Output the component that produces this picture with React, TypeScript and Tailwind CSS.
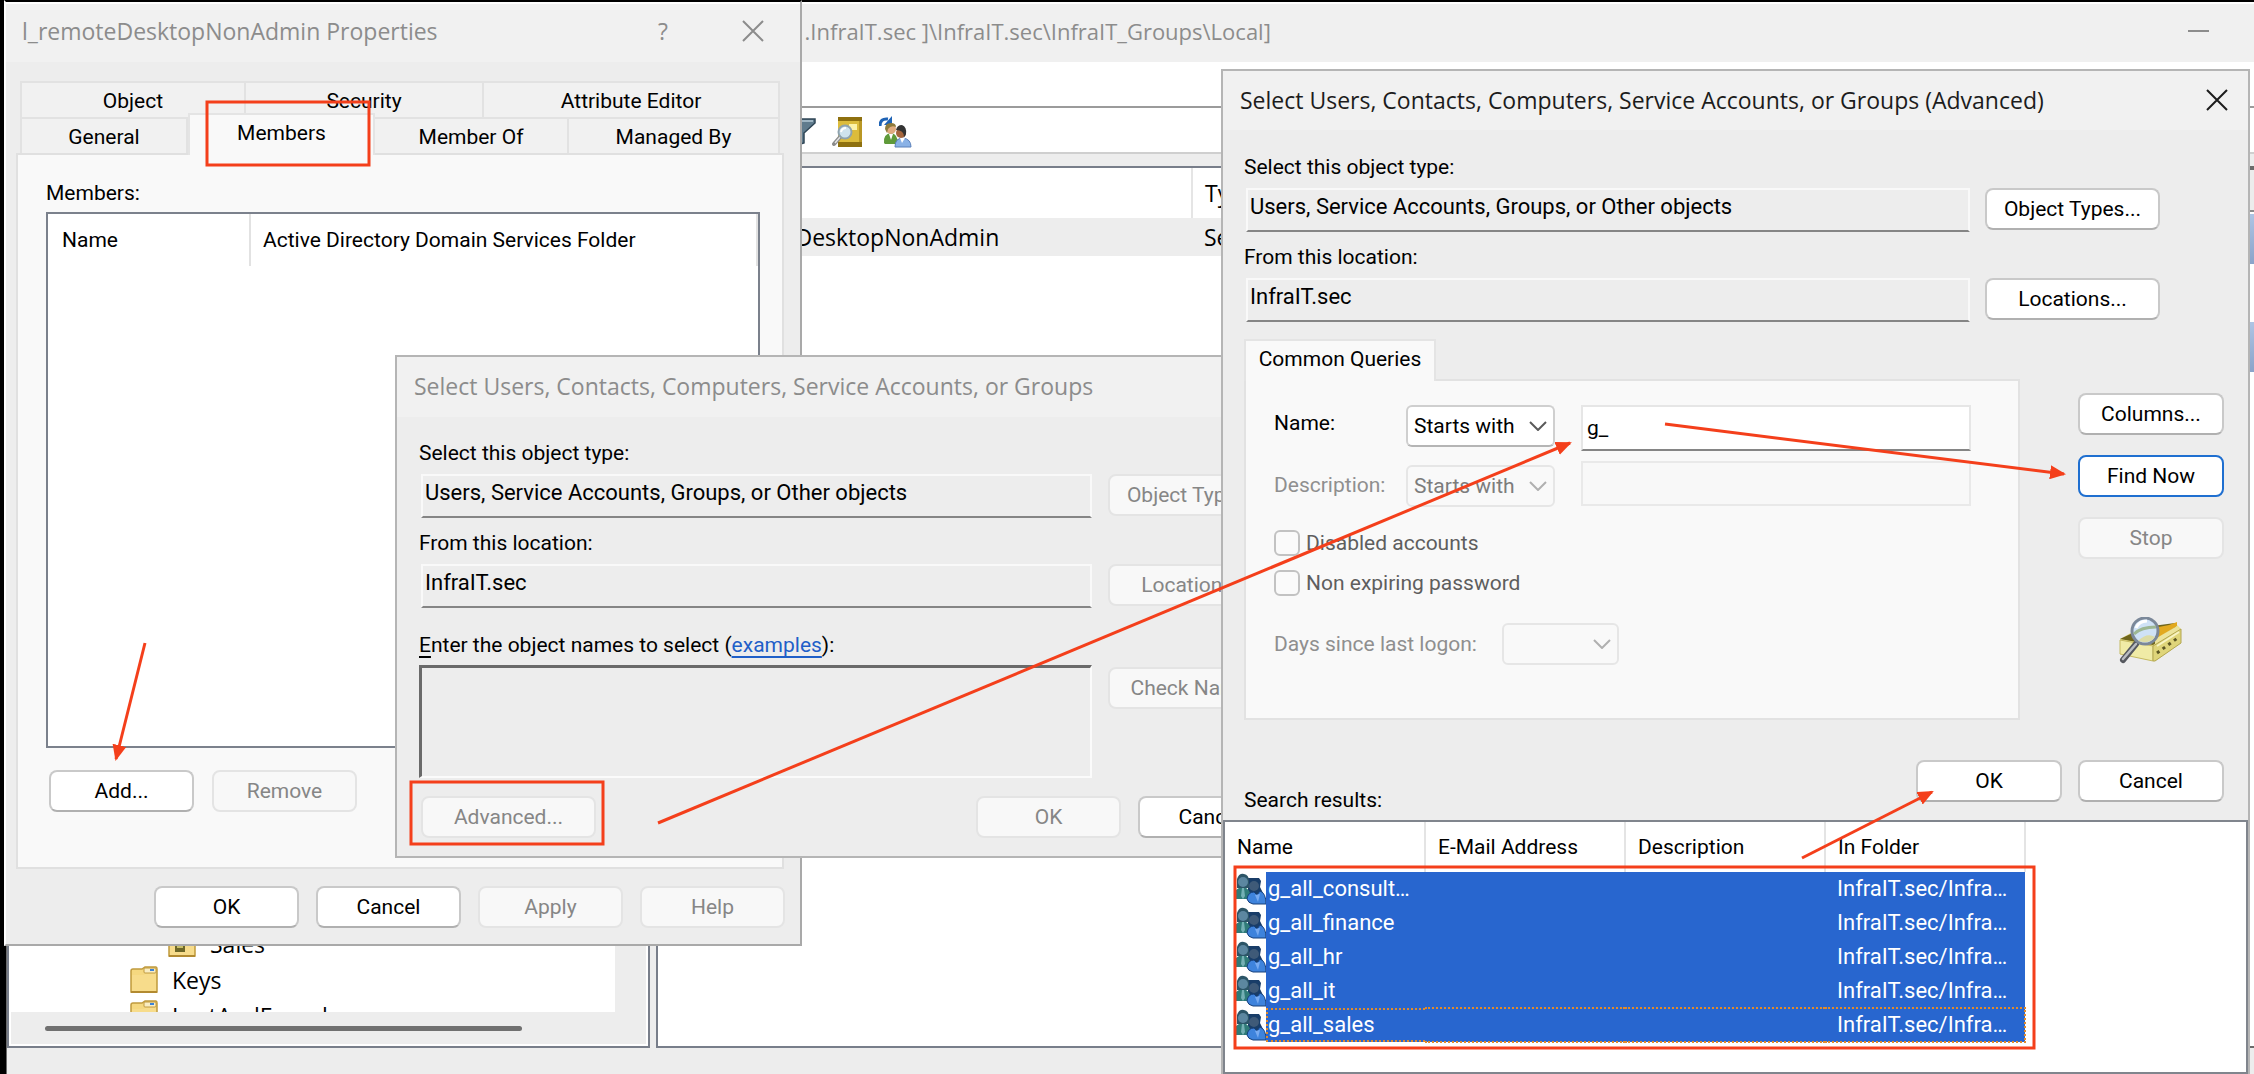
import type { ReactNode } from 'react';

const titleFont = "font-['Open_Sans','Noto_Sans',sans-serif] text-[23px] leading-8";
const bodyFont = "font-['Roboto','Noto_Sans',sans-serif] text-[21px] leading-7";

function Button({ children, className = '', disabled = false, primary = false }: { children: ReactNode; className?: string; disabled?: boolean; primary?: boolean }) {
  const look = disabled
    ? 'border-[#e4e4e4] bg-[#f8f8f8] text-[#868686]'
    : primary
      ? 'border-[#1f6fd0] bg-white text-black'
      : 'border-[#c9c9c9] border-b-[#b0b0b0] bg-white text-black';
  return (
    <button type="button" disabled={disabled} className={`h-[42px] shrink-0 overflow-hidden whitespace-nowrap rounded-lg border-2 ${look} ${className}`}>
      {children}
    </button>
  );
}

function CloseIcon({ className = '' }: { className?: string }) {
  return (
    <svg className={`size-[22px] ${className}`} viewBox="0 0 22 22" fill="none" stroke="currentColor" strokeWidth="2">
      <path d="M1 1L21 21M21 1L1 21" />
    </svg>
  );
}

function Field({ id, label, value }: { id: string; label: string; value: string }) {
  return (
    <div className="min-w-0 flex-1">
      <label htmlFor={id} className="block pb-[7px]">{label}</label>
      <input
        id={id}
        readOnly
        value={value}
        className="ml-0.5 block h-11 w-full border-2 border-[#f9f9f9] border-b-[#858585] bg-[#ededed] pb-2 pl-0.5 text-[22px] outline-none"
      />
    </div>
  );
}

function FolderIcon({ marked = false }: { marked?: boolean }) {
  return (
    <svg className="size-7 shrink-0" viewBox="0 0 28 28">
      <path d="M1 5Q1 3 3 3H12L15 1H26Q27 1 27 3V26H1Z" fill="#f5d880" stroke="#c09a3e" strokeWidth="1.5" />
      <path d="M2 9H14L16 7H26V25H2Z" fill="#f7dc8b" />
      <rect x="14" y="2" width="12" height="5" rx="1" fill="#f9edc3" stroke="#c09a3e" />
      <rect x="20" y="3" width="4" height="2" fill="#3b82d8" />
      <path d="M1 26H27" stroke="#b28a30" strokeWidth="2" />
      {marked && (
        <g>
          <rect x="7" y="13" width="10" height="9" fill="#6d6727" />
          <rect x="9" y="14" width="6" height="4" fill="#c9c069" />
        </g>
      )}
    </svg>
  );
}

function FilterIcon() {
  return (
    <svg className="h-7 w-8" viewBox="0 0 32 28">
      <path d="M1 1H31V5L20 15V25L13 27V15L1 5Z" fill="#5f7b8d" stroke="#2f4656" strokeWidth="1.5" />
      <path d="M3 3H29" stroke="#9eb5c3" strokeWidth="2" />
      <path d="M15 15V24" stroke="#a9bfcc" strokeWidth="2" />
    </svg>
  );
}

function BookSearchIcon() {
  return (
    <svg className="h-8 w-[31px]" viewBox="0 0 31 32">
      <rect x="6" y="1" width="24" height="30" fill="#dcbc3c" />
      <path d="M6 1H30V5H6ZM6 26H30V31H6Z" fill="#8e700f" />
      <path d="M27 5H30V26H27Z" fill="#b99724" />
      <rect x="17" y="8" width="8" height="6" fill="#fdf3a8" />
      <path d="M9 20L2 28" stroke="#8b8b8b" strokeWidth="4" strokeLinecap="round" />
      <path d="M9 20L3 27" stroke="#e4e4e4" strokeWidth="1.5" />
      <circle cx="13" cy="16" r="6.5" fill="#cfe3ee" stroke="#8fa3ae" strokeWidth="2" />
      <path d="M9 16Q10 12 14 12" stroke="#fff" strokeWidth="2" fill="none" />
    </svg>
  );
}

function AddUsersIcon() {
  return (
    <svg className="h-8 w-[33px]" viewBox="0 0 33 32">
      <path d="M1 10Q1 2 9 3" stroke="#1f63b5" strokeWidth="3" fill="none" />
      <path d="M13 0V9H5Z" fill="#1f63b5" />
      <path d="M5 27Q4 18 12 17Q19 18 19 28H6Z" fill="#5f9a3a" />
      <path d="M10 18L12 24L14 18Z" fill="#fff" />
      <circle cx="12" cy="13" r="5" fill="#e0ab80" />
      <path d="M6 13Q6 7 12 7Q17 7 17 11Q12 9 9 13L8 17Z" fill="#8d7a3b" />
      <path d="M16 31Q16 22 24 22Q32 23 32 31Z" fill="#8ab2e6" stroke="#5a80ba" />
      <path d="M21 22L23 27L26 22Z" fill="#fff" />
      <circle cx="22" cy="17" r="5" fill="#a5663d" />
      <path d="M17 14Q18 9 23 9Q28 11 27 18Q26 21 25 21Q25 14 17 14Z" fill="#333" />
    </svg>
  );
}

function GroupIcon() {
  return (
    <svg className="h-8 w-[30px]" viewBox="0 0 30 32">
      <path d="M12 5H23L25 8L24 14L27 20L20 24L12 20Z" fill="#193d68" />
      <circle cx="18" cy="13" r="5" fill="#3f5a78" />
      <path d="M0 26V17Q3 14 7 14Q14 15 15 24L13 26Z" fill="#2f7b78" />
      <path d="M1 6Q3 0 8 1Q13 2 13 8V15H1Z" fill="#2c5567" />
      <circle cx="7" cy="9" r="5" fill="#5c87a0" />
      <path d="M6 15H8L9 23L7 26L5 23Z" fill="#74b0b4" />
      <path d="M11 26Q12 19 18 19L21 22L24 18Q30 20 30 31H17Q12 30 11 26Z" fill="#3e83dc" stroke="#16407c" />
      <path d="M19 22L22 29L24 21Z" fill="#77aaf0" />
    </svg>
  );
}

function SearchDirectoryIcon() {
  return (
    <svg className="h-12 w-16" viewBox="0 0 64 48">
      <path d="M1 22L26 8H58L62 12V26L36 44L1 37Z" fill="#e9e08c" />
      <path d="M1 22L26 10L56 6L58 12L34 28Z" fill="#6f651c" />
      <path d="M24 13L50 8L58 5V9L38 22L30 25Z" fill="#e2a91f" />
      <path d="M36 22L58 9L61 13L36 29Z" fill="#ece49c" />
      <path d="M1 23L34 29V44L1 37Z" fill="#f0eba6" stroke="#c5ba62" />
      <path d="M34 29L62 12V26L36 44H34Z" fill="#dfd57a" stroke="#b3a650" />
      <path d="M38 36L60 20" stroke="#5e5824" strokeWidth="3" strokeDasharray="3 4" />
      <path d="M38 29L60 15" stroke="#f8f4c4" strokeWidth="2" />
      <path d="M17 27L4 43" stroke="#55585e" strokeWidth="6" strokeLinecap="round" />
      <path d="M17 27L4 42" stroke="#b9bcc2" strokeWidth="2.5" strokeLinecap="round" />
      <circle cx="26" cy="14" r="13" fill="#cfe2f6" stroke="#7b8899" strokeWidth="3" />
      <path d="M15 17Q22 10 37 10" stroke="#9db793" strokeWidth="3" fill="none" />
      <path d="M19 24Q28 15 36 20Q32 26 24 25Z" fill="#dcdca6" />
      <path d="M17 11Q20 4 28 4" stroke="#fff" strokeWidth="3" fill="none" />
    </svg>
  );
}

function ConsoleWindow() {
  return (
    <main className="absolute inset-y-0 left-1.5 right-0 flex flex-col border-l border-t-2 border-[#6b6b6b] border-t-black bg-[#ededed]">
      <header className="flex h-[60px] shrink-0 items-center justify-between border-t-2 border-white bg-[#f0f0f0] pb-1 pl-[785px] pr-[45px] font-['Open_Sans','Noto_Sans',sans-serif] text-[22px] leading-8 text-[#8c8c8c]">
        <h1>1.InfraIT.sec ]\InfraIT.sec\InfraIT_Groups\Local]</h1>
        <button type="button" aria-label="Minimize" className="h-0.5 w-[21px] bg-[#8c8c8c]" />
      </header>
      <div className="h-[46px] shrink-0 border-b-2 border-[#9b9b9b] bg-white" />
      <div className="flex h-[46px] shrink-0 items-center gap-4 border-b-2 border-[#cfcfcf] bg-white pl-[777px] pt-1">
        <FilterIcon />
        <BookSearchIcon />
        <AddUsersIcon />
      </div>
      <div className={`mt-3 flex min-h-0 flex-1 gap-1.5 ${titleFont}`}>
        <nav className="flex w-[643px] flex-col border-2 border-[#787e8a] bg-white p-0.5 pt-0">
          <div className="flex min-h-0 flex-1">
            <ul className="flex flex-1 flex-col justify-end overflow-hidden">
              <li className="flex h-9 shrink-0 items-center gap-3.5 pl-[157px]"><FolderIcon marked />Sales</li>
              <li className="flex h-9 shrink-0 items-center gap-3.5 pl-[119px]"><FolderIcon />Keys</li>
              <li className="flex h-3.5 shrink-0 items-start gap-3.5 overflow-hidden pl-[119px] pt-0.5"><FolderIcon /><span>LostAndFound</span></li>
            </ul>
            <div className="w-[31px] bg-[#ededed]" />
          </div>
          <div className="flex h-8 shrink-0 items-center bg-[#ededed] pl-[34px] pr-[124px]">
            <div className="h-[5px] w-full rounded-sm bg-[#707070]" />
          </div>
        </nav>
        <section className="flex min-w-0 flex-1 flex-col border-2 border-r-0 border-[#787e8a] bg-white">
          <table className="w-full table-fixed text-left">
            <colgroup><col className="w-[534px]" /><col className="w-[42px]" /><col /></colgroup>
            <thead>
              <tr className="h-[50px]">
                <th className="border-r-2 border-[#e5e5e5] font-normal" aria-label="Name" />
                <th className="overflow-hidden whitespace-nowrap pl-3 font-normal">Type</th>
                <th aria-label="Description" />
              </tr>
            </thead>
            <tbody>
              <tr className="h-[38px] bg-[#ededed]">
                <td className="truncate pl-[43px]">l_remoteDesktopNonAdmin</td>
                <td className="overflow-hidden whitespace-nowrap pl-3">Security Group</td>
                <td />
              </tr>
            </tbody>
          </table>
        </section>
        <aside className="-ml-1.5 flex w-[5px] flex-col border-b-2 border-t-4 border-[#6b6b6b] bg-white">
          <div className="h-[42px] border-b-2 border-[#8c8c8c] bg-[#ececec]" />
          <div className="mt-0.5 h-[50px] bg-gradient-to-b from-[#aec4e4] to-[#8aa3c9]" />
          <div className="mt-[58px] h-[50px] bg-gradient-to-b from-[#aec4e4] to-[#8aa3c9]" />
        </aside>
      </div>
      <footer className="h-[26px] shrink-0" />
    </main>
  );
}

function Tab({ children, className = '' }: { children: ReactNode; className?: string }) {
  return (
    <button type="button" role="tab" className={`h-9 border-r-2 border-t-2 border-[#e2e2e2] bg-[#f1f1f1] pt-0.5 ${className}`}>
      {children}
    </button>
  );
}

function PropertiesDialog() {
  return (
    <section className={`absolute left-1 top-0 flex w-[798px] flex-col border-2 border-[#a9a9a9] border-l-white border-t-black bg-[#ededed] ${bodyFont}`}>
      <header className={`flex h-[60px] items-center border-t-2 border-white bg-[#f1f1f1] pb-1 pl-4 pr-9 text-[#8c8c8c] ${titleFont}`}>
        <h2 className="flex-1">l_remoteDesktopNonAdmin Properties</h2>
        <button type="button" className="mr-[74px]">?</button>
        <button type="button" aria-label="Close"><CloseIcon /></button>
      </header>
      <div role="tablist" className="mt-[19px] pl-3.5 pr-5">
        <div className="flex">
          <Tab className="w-[226px] border-l-2">Object</Tab>
          <Tab className="w-[238px]">Security</Tab>
          <Tab className="flex-1">Attribute Editor</Tab>
        </div>
        <div className="flex items-end">
          <Tab className="w-[168px] border-l-2 border-r-0">General</Tab>
          <button type="button" role="tab" aria-selected="true" className="relative -mb-0.5 -mt-1 h-[42px] w-[187px] border-2 border-b-0 border-[#e4e4e4] bg-[#f9f9f9] pb-1">Members</button>
          <Tab className="w-[194px]">Member Of</Tab>
          <Tab className="flex-1">Managed By</Tab>
        </div>
      </div>
      <div className="ml-2.5 mr-4 h-[716px] border-2 border-[#e0e0e0] bg-[#f9f9f9] pl-7 pr-[22px] pt-6">
        <h3>Members:</h3>
        <div className="mt-[5px] h-[536px] border-2 border-[#7b818c] bg-white">
          <table className="w-full table-fixed text-left">
            <colgroup><col className="w-[202px]" /><col /></colgroup>
            <thead>
              <tr className="h-[52px]">
                <th className="border-r-2 border-[#e2e2e2] pl-3.5 font-normal">Name</th>
                <th className="border-r-2 border-[#e2e2e2] pl-3 font-normal">Active Directory Domain Services Folder</th>
              </tr>
            </thead>
          </table>
        </div>
        <div className="mt-[22px] flex gap-[18px] pl-[3px]">
          <Button className="w-[145px]">Add...</Button>
          <Button className="w-[145px]" disabled>Remove</Button>
        </div>
      </div>
      <div className="mb-4 mt-[17px] flex justify-end gap-[17px] pr-[15px]">
        <Button className="w-[145px]">OK</Button>
        <Button className="w-[145px]">Cancel</Button>
        <Button className="w-[145px]" disabled>Apply</Button>
        <Button className="w-[145px]" disabled>Help</Button>
      </div>
    </section>
  );
}

function SelectDialog() {
  return (
    <section className={`absolute left-[395px] top-[355px] flex w-[912px] flex-col border-2 border-[#b5b5b5] bg-[#ededed] ${bodyFont}`}>
      <header className={`flex h-[60px] items-center bg-[#f1f1f1] pb-0.5 pl-[17px] text-[#8c8c8c] ${titleFont}`}>
        <h2>Select Users, Contacts, Computers, Service Accounts, or Groups</h2>
      </header>
      <div className="flex flex-col px-[22px] pb-[18px] pt-[22px]">
        <div className="flex items-end gap-[18px]">
          <Field id="select-type" label="Select this object type:" value="Users, Service Accounts, Groups, or Other objects" />
          <Button className="mb-0.5 w-[175px]" disabled>Object Types...</Button>
        </div>
        <div className="mt-[11px] flex items-end gap-[18px]">
          <Field id="select-location" label="From this location:" value="InfraIT.sec" />
          <Button className="mb-0.5 w-[175px]" disabled>Locations...</Button>
        </div>
        <div className="mt-[23px]">
          <label htmlFor="select-names"><span className="underline underline-offset-4">E</span>nter the object names to select (</label>
          <a href="#examples" className="text-[#1f5fc8] underline underline-offset-4">examples</a>):
        </div>
        <div className="mt-1.5 flex gap-4">
          <textarea id="select-names" disabled className="block h-[113px] min-w-0 flex-1 resize-none border-[3px] border-b-2 border-r-2 border-[#6a6a6a] border-b-[#fbfbfb] border-r-[#fbfbfb] bg-[#ededed]" />
          <Button className="mt-0.5 w-[175px]" disabled>Check Names</Button>
        </div>
        <div className="mt-[18px] flex gap-[17px]">
          <Button className="ml-0.5 w-[175px]" disabled>Advanced...</Button>
          <div className="flex-1" />
          <Button className="w-[145px]" disabled>OK</Button>
          <Button className="w-[145px]">Cancel</Button>
        </div>
      </div>
    </section>
  );
}

function Select({ id, options, disabled = false, className = '' }: { id: string; options: string[]; disabled?: boolean; className?: string }) {
  return (
    <div className={`relative ${className}`}>
      <select
        id={id}
        disabled={disabled}
        className={`h-[42px] w-full appearance-none rounded-md border-2 pl-1.5 opacity-100 ${disabled ? 'border-[#e6e6e6] bg-[#f9f9f9] text-[#7c7c7c]' : 'border-[#cfcfcf] border-b-[#b5b5b5] bg-white'}`}
      >
        {options.map((option) => <option key={option}>{option}</option>)}
      </select>
      <svg className={`pointer-events-none absolute right-2 top-4 h-2.5 w-[18px] ${disabled ? 'text-[#b0b0b0]' : 'text-[#5a5a5a]'}`} viewBox="0 0 18 10" fill="none" stroke="currentColor" strokeWidth="2">
        <path d="M1 1L9 9L17 1" />
      </svg>
    </div>
  );
}

function CheckRow({ label }: { label: string }) {
  return (
    <label className="flex h-10 items-center gap-1.5 text-[#5e5e5e]">
      <input type="checkbox" className="size-[26px] appearance-none rounded-md border-2 border-[#c2c2c2] bg-[#fafafa]" />
      {label}
    </label>
  );
}

const results = ['g_all_consult…', 'g_all_finance', 'g_all_hr', 'g_all_it', 'g_all_sales'];
const columns = ['Name', 'E-Mail Address', 'Description', 'In Folder'];

function ResultsTable() {
  return (
    <div className="flex-1 border-2 border-[#80858d] bg-white">
      <table className="w-[800px] table-fixed text-left">
        <colgroup><col className="w-[200px]" /><col className="w-[200px]" /><col className="w-[200px]" /><col className="w-[200px]" /></colgroup>
        <thead>
          <tr className="h-[50px]">
            {columns.map((column) => <th key={column} className="border-r-2 border-[#e4e4e4] pl-3 font-normal">{column}</th>)}
          </tr>
        </thead>
        <tbody>
          {results.map((name, index) => {
            const focused = index === results.length - 1;
            const edge = focused ? 'border-y-2 border-dotted border-[#e08a2c]' : '';
            return (
              <tr key={name} className="h-[34px] text-[22px] text-white">
                <td className="p-0">
                  <div className="flex h-[34px] items-center pl-[11px]">
                    <GroupIcon />
                    <span className={`flex h-full flex-1 items-center bg-[#2866cf] ${focused ? 'border-l-2' : 'pl-0.5'} ${edge}`}>{name}</span>
                  </div>
                </td>
                <td className={`bg-[#2866cf] ${edge}`} />
                <td className={`bg-[#2866cf] ${edge}`} />
                <td className={`bg-[#2866cf] py-0 pl-3 ${focused ? 'border-r-2' : ''} ${edge}`}>InfraIT.sec/Infra…</td>
              </tr>
            );
          })}
        </tbody>
      </table>
    </div>
  );
}

function AdvancedDialog() {
  return (
    <section className={`absolute bottom-0 left-[1221px] right-1 top-[69px] flex flex-col border-2 border-b-0 border-[#b5b5b5] bg-[#ededed] ${bodyFont}`}>
      <header className={`flex h-[59px] shrink-0 items-center justify-between bg-[#f1f1f1] pb-0.5 pl-[17px] pr-5 text-[#1c1c1c] ${titleFont}`}>
        <h2>Select Users, Contacts, Computers, Service Accounts, or Groups (Advanced)</h2>
        <button type="button" aria-label="Close"><CloseIcon /></button>
      </header>
      <div className="mt-[23px] flex items-end gap-[17px] pl-[21px] pr-[88px]">
        <Field id="adv-type" label="Select this object type:" value="Users, Service Accounts, Groups, or Other objects" />
        <Button className="mb-0.5 w-[175px]">Object Types...</Button>
      </div>
      <div className="mt-[11px] flex items-end gap-[17px] pl-[21px] pr-[88px]">
        <Field id="adv-location" label="From this location:" value="InfraIT.sec" />
        <Button className="mb-0.5 w-[175px]">Locations...</Button>
      </div>
      <div className="mt-[17px] flex pl-[21px] pr-6">
        <div className="flex-1">
          <button type="button" role="tab" aria-selected="true" className="relative -mb-0.5 block h-[42px] w-[192px] border-2 border-b-0 border-[#e4e4e4] bg-[#f9f9f9] pb-1">Common Queries</button>
          <div className="h-[341px] border-2 border-[#e2e2e2] bg-[#f9f9f9] pl-7 pr-[47px] pt-6">
            <div className="flex gap-7">
              <label htmlFor="name-mode" className="w-[104px] pt-1">Name:</label>
              <Select id="name-mode" options={['Starts with']} className="w-[149px]" />
              <input aria-label="Name" defaultValue="g_" className="-ml-0.5 h-[46px] min-w-0 flex-1 border-2 border-[#e6e6e6] border-b-[#858585] bg-white pl-1 outline-none" />
            </div>
            <div className="mt-2.5 flex gap-7">
              <label htmlFor="description-mode" className="w-[104px] pt-2.5 text-[#8f8f8f]">Description:</label>
              <Select id="description-mode" options={['Starts with']} disabled className="mt-1 w-[149px]" />
              <input aria-label="Description" disabled className="-ml-0.5 h-[45px] min-w-0 flex-1 border-2 border-[#e9e9e9] bg-[#f8f8f8]" />
            </div>
            <div className="mt-4">
              <CheckRow label="Disabled accounts" />
              <CheckRow label="Non expiring password" />
            </div>
            <div className="mt-5 flex items-center">
              <label htmlFor="logon-days" className="w-[228px] text-[#8f8f8f]">Days since last logon:</label>
              <Select id="logon-days" options={['']} disabled className="w-[117px]" />
            </div>
          </div>
        </div>
        <div className="ml-[58px] mt-[54px] flex w-[146px] flex-col items-stretch gap-5">
          <Button>Columns...</Button>
          <Button primary>Find Now</Button>
          <Button disabled>Stop</Button>
          <div className="mt-[38px] flex justify-center"><SearchDirectoryIcon /></div>
        </div>
      </div>
      <div className="mt-10 flex h-[60px] shrink-0 items-start pl-[21px] pr-6">
        <h3 className="flex-1 pt-[26px]">Search results:</h3>
        <Button className="mr-4 w-[146px]">OK</Button>
        <Button className="w-[146px]">Cancel</Button>
      </div>
      <ResultsTable />
    </section>
  );
}

function Annotations() {
  return (
    <svg className="pointer-events-none absolute inset-0 h-full w-full" fill="none" stroke="#f43f1b" strokeWidth="3">
      <defs>
        <marker id="head" markerUnits="userSpaceOnUse" markerWidth="16" markerHeight="14" refX="14" refY="7" orient="auto">
          <path d="M0 0L16 7L0 14Z" fill="#f43f1b" stroke="none" />
        </marker>
      </defs>
      <rect x="207" y="102" width="162" height="63" />
      <rect x="411" y="782" width="192" height="62" />
      <rect x="1235" y="867" width="799" height="181" />
      <path d="M145 643L116 759" markerEnd="url(#head)" />
      <path d="M658 823L1570 443" markerEnd="url(#head)" />
      <path d="M1665 424L2064 474" markerEnd="url(#head)" />
      <path d="M1802 858L1932 792" markerEnd="url(#head)" />
    </svg>
  );
}

export default function App() {
  return (
    <div className="relative h-screen overflow-hidden bg-black text-black">
      <ConsoleWindow />
      <PropertiesDialog />
      <SelectDialog />
      <AdvancedDialog />
      <Annotations />
    </div>
  );
}
